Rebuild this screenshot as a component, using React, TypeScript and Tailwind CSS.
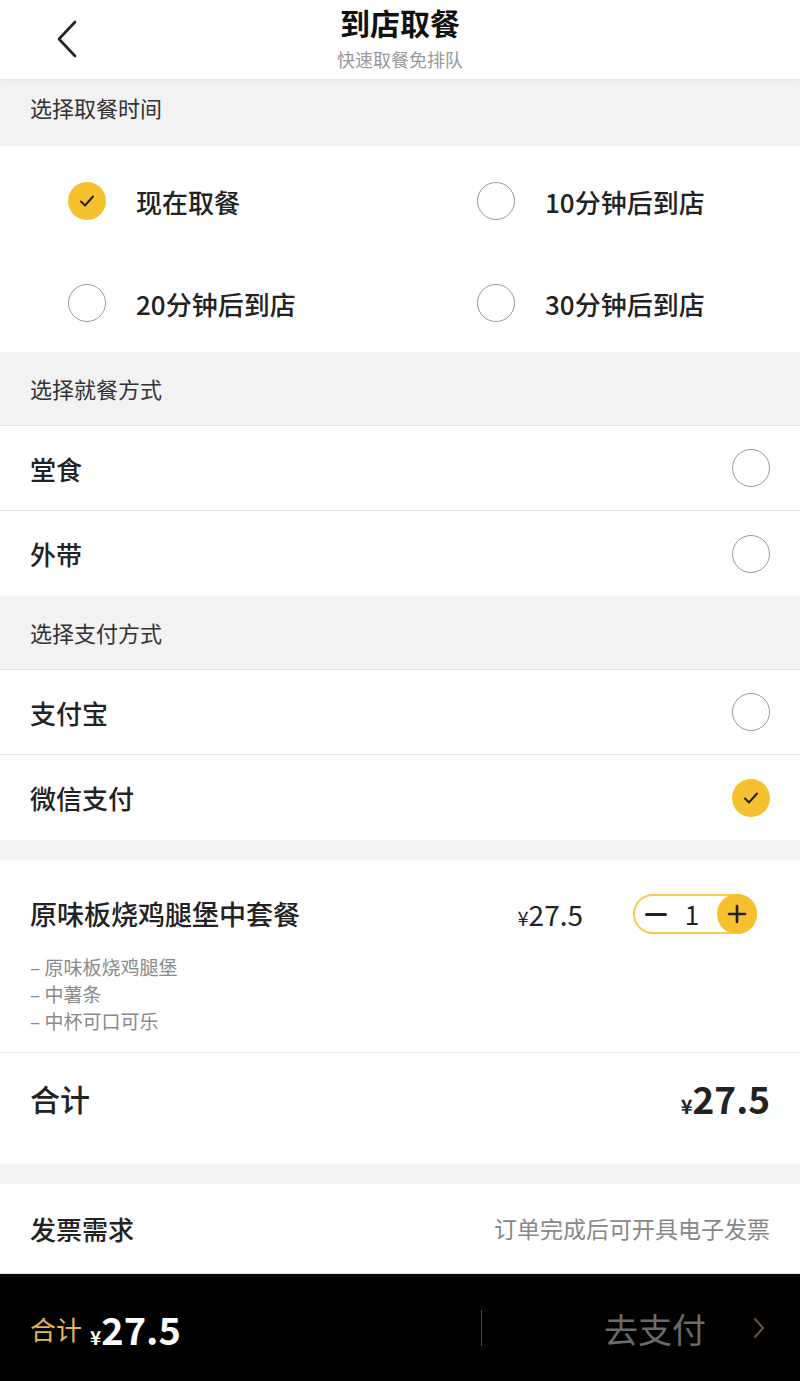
const font = { fontFamily: '"Noto Sans CJK SC", "Noto Sans", sans-serif' };

function Radio({ checked }: { checked?: boolean }) {
  if (checked) {
    return (
      <div className="w-[38px] h-[38px] rounded-full bg-[#f5c12e] flex items-center justify-center shrink-0">
        <svg width="16" height="14" viewBox="0 0 16 14" fill="none">
          <path d="M2 7.5 L6 11.5 L14 2.5" stroke="#222" strokeWidth="2" strokeLinecap="round" strokeLinejoin="round" />
        </svg>
      </div>
    );
  }
  return <div className="w-[38px] h-[38px] rounded-full border border-[#9a9a9a] shrink-0" />;
}

function SectionHead({ title }: { title: string }) {
  return (
    <div className="bg-[#f2f2f2] h-[74px] flex items-center px-[30px] text-[22px] text-[#333] border-b border-[#e4e4e4]">
      {title}
    </div>
  );
}

function OptionRow({ label, checked, last }: { label: string; checked?: boolean; last?: boolean }) {
  return (
    <div className={`h-[85px] flex items-center justify-between px-[30px] bg-white ${last ? "" : "border-b border-[#e4e4e4]"}`}>
      <span className="text-[26px] text-[#222] font-medium">{label}</span>
      <Radio checked={checked} />
    </div>
  );
}

function TimeOption({ label, checked }: { label: string; checked?: boolean }) {
  return (
    <div className="flex items-center gap-[30px] h-[50px]">
      <Radio checked={checked} />
      <span className="text-[26px] text-[#222] font-medium">{label}</span>
    </div>
  );
}

export default function App() {
  return (
    <div className="min-h-screen w-[800px] bg-[#f2f2f2] flex flex-col" style={font}>
      {/* header */}
      <div className="h-[80px] bg-white relative flex flex-col items-center border-b border-[#e8e8e8] shadow-[0_2px_4px_rgba(0,0,0,0.04)]">
        <svg className="absolute left-[56px] top-[20px]" width="22" height="38" viewBox="0 0 22 38" fill="none">
          <path d="M19 2 L3 19 L19 36" stroke="#222" strokeWidth="2.6" strokeLinecap="round" strokeLinejoin="round" />
        </svg>
        <div className="text-[30px] font-bold text-[#111] leading-[30px] mt-[7px]">到店取餐</div>
        <div className="text-[18px] text-[#999] leading-[20px] mt-[12px]">快速取餐免排队</div>
      </div>

      <div className="bg-[#f2f2f2] h-[66px] flex items-center px-[30px] pb-[12px] text-[22px] text-[#333]">选择取餐时间</div>
      <div className="bg-white h-[206px] pl-[68px] pt-[30px] grid grid-cols-[409px_1fr] gap-y-[52px] content-start">
        <TimeOption label="现在取餐" checked />
        <TimeOption label="10分钟后到店" />
        <TimeOption label="20分钟后到店" />
        <TimeOption label="30分钟后到店" />
      </div>

      <SectionHead title="选择就餐方式" />
      <OptionRow label="堂食" />
      <OptionRow label="外带" last />

      <SectionHead title="选择支付方式" />
      <OptionRow label="支付宝" />
      <OptionRow label="微信支付" checked last />

      {/* product */}
      <div className="mt-[20px] bg-white px-[30px] pt-[33px] pb-[18px] border-b border-[#ececec]">
        <div className="flex items-center">
          <span className="text-[27px] text-[#222] font-medium flex-1">原味板烧鸡腿堡中套餐</span>
          <span className="text-[#222] mr-[50px] flex items-baseline">
            <span className="text-[20px]">¥</span>
            <span className="text-[28px]">27.5</span>
          </span>
          <div className="w-[124px] h-[40px] rounded-full border-2 border-[#f2cd55] flex items-center mr-[13px]">
            <span className="w-[22px] h-[3px] bg-[#222] ml-[10px] rounded-sm" />
            <span className="flex-1 text-center text-[26px] text-[#222] leading-none">1</span>
            <span className="w-[40px] h-[40px] -mr-[2px] rounded-full bg-[#f5c12e] flex items-center justify-center">
              <svg width="20" height="20" viewBox="0 0 20 20">
                <path d="M10 2 V18 M2 10 H18" stroke="#222" strokeWidth="2.6" strokeLinecap="round" />
              </svg>
            </span>
          </div>
        </div>
        <div className="mt-[18px] text-[19px] text-[#8a8a8a] leading-[27px]">
          <div>– 原味板烧鸡腿堡</div>
          <div>– 中薯条</div>
          <div>– 中杯可口可乐</div>
        </div>
      </div>

      {/* total */}
      <div className="bg-white h-[111px] px-[30px] pb-[20px] flex items-center justify-between">
        <span className="text-[30px] text-[#222] font-medium">合计</span>
        <span className="text-[#222] font-bold flex items-baseline">
          <span className="text-[20px]">¥</span>
          <span className="text-[37px]">27.5</span>
        </span>
      </div>

      {/* invoice */}
      <div className="mt-[20px] bg-white h-[90px] px-[30px] flex items-center justify-between border-b border-[#e4e4e4]">
        <span className="text-[26px] text-[#222] font-medium">发票需求</span>
        <span className="text-[23px] text-[#888]">订单完成后可开具电子发票</span>
      </div>

      {/* bottom bar */}
      <div className="bg-black h-[108px] flex items-center pl-[30px] pr-[34px] mt-auto">
        <span className="text-[26px] text-[#e8b84e]">合计</span>
        <span className="ml-[8px] text-white font-bold flex items-baseline">
          <span className="text-[19px]">¥</span>
          <span className="text-[38px]">27.5</span>
        </span>
        <div className="ml-auto w-px h-[36px] bg-[#444]" />
        <span className="ml-[122px] text-[34px] text-[#6b6b6b]">去支付</span>
        <svg className="ml-[46px]" width="14" height="24" viewBox="0 0 14 24" fill="none">
          <path d="M3 3 L11 12 L3 21" stroke="#6e5540" strokeWidth="2" strokeLinecap="round" strokeLinejoin="round" />
        </svg>
      </div>
    </div>
  );
}
